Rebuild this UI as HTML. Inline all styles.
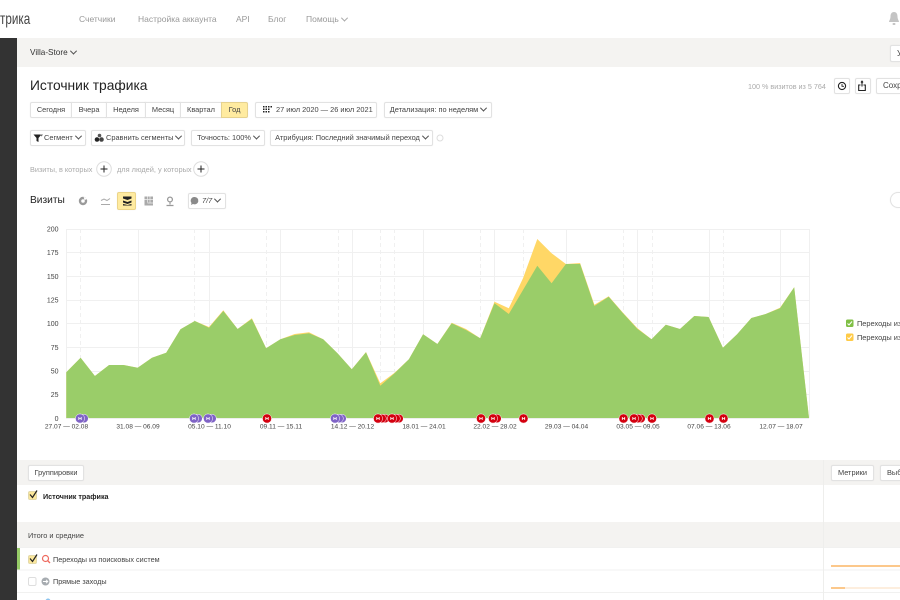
<!DOCTYPE html>
<html lang="ru"><head><meta charset="utf-8"><title>Источник трафика</title>
<style>
html,body{margin:0;padding:0;background:#fff}
body{width:900px;height:600px;overflow:hidden;position:relative;font-family:"Liberation Sans","Noto Sans CJK SC",sans-serif;font-size:7.4px;color:#333;filter:blur(.3px)}
.a{position:absolute;white-space:nowrap}
.b{position:absolute;box-sizing:border-box;background:#fff;border:1px solid #e2e2e2;border-radius:2px;box-shadow:0 0 1px rgba(0,0,0,.08);white-space:nowrap;text-align:center;color:#444;font-size:7.4px;overflow:hidden}
.e{border-right:0;border-radius:2px 0 0 2px;text-align:left;padding-left:6px;font-size:8px}
.n{color:#999;font-size:8.5px;top:14px}
.c{display:inline-block;width:4px;height:4px;border-right:1px solid #555;border-bottom:1px solid #555;transform:rotate(45deg) translate(-1px,-1px);margin-left:3px}
.band{position:absolute;left:17px;right:0;background:#f4f3f1}
svg{position:absolute;left:0;top:0}
</style></head><body>
<div class="a" style="left:0;top:11px;font-size:16px;color:#444;transform:scaleX(.73);transform-origin:0 0;width:40px;font-weight:normal">трика</div>
<div class="a n" style="left:79px">Счетчики</div>
<div class="a n" style="left:138px">Настройка аккаунта</div>
<div class="a n" style="left:236px">API</div>
<div class="a n" style="left:268px">Блог</div>
<div class="a n" style="left:306px">Помощь<span class="c" style="border-color:#aaa"></span></div>

<div class="a" style="left:0;top:38px;width:17px;height:562px;background:#333"></div>
<div class="band" style="top:38px;height:29px"></div>
<div class="a" style="left:30px;top:48px;font-size:8.2px;color:#333">Villa-Store<span class="c"></span></div>
<div class="b e" style="left:890px;top:45px;width:10px;height:17px;line-height:15px">Удалить</div>

<div class="a" style="left:30px;top:78px;font-size:13.8px;color:#222">Источник трафика</div>
<div class="a" style="left:748px;top:82px;font-size:7.2px;color:#aaa">100 % визитов из 5 764</div>
<div class="b" style="left:834px;top:78px;width:16px;height:16px"></div>
<div class="b" style="left:855px;top:78px;width:16px;height:16px"></div>
<div class="b e" style="left:876px;top:78px;width:24px;height:16px;line-height:14px">Сохранить</div>

<div class="b" style="left:30px;top:102px;width:42px;height:16px;line-height:14px;border-radius:2px 0 0 2px">Сегодня</div>
<div class="b" style="left:71px;top:102px;width:36px;height:16px;line-height:14px;border-radius:0">Вчера</div>
<div class="b" style="left:106px;top:102px;width:40px;height:16px;line-height:14px;border-radius:0">Неделя</div>
<div class="b" style="left:145px;top:102px;width:36px;height:16px;line-height:14px;border-radius:0">Месяц</div>
<div class="b" style="left:180px;top:102px;width:42px;height:16px;line-height:14px;border-radius:0">Квартал</div>
<div class="b" style="left:221px;top:102px;width:27px;height:16px;line-height:14px;background:#ffeba0;border-color:#e6d28f;border-radius:0 2px 2px 0">Год</div>
<div class="b" style="left:255px;top:102px;width:122px;height:16px;line-height:14px;text-align:left;padding-left:20px">27 июл 2020 — 26 июл 2021</div>
<div class="b" style="left:384px;top:102px;width:108px;height:16px;line-height:14px">Детализация: по неделям<span class="c"></span></div>

<div class="b" style="left:30px;top:130px;width:56px;height:16px;line-height:14px;text-align:left;padding-left:13px">Сегмент<span class="c"></span></div>
<div class="b" style="left:91px;top:130px;width:94px;height:16px;line-height:14px;text-align:left;padding-left:14px">Сравнить сегменты<span class="c"></span></div>
<div class="b" style="left:191px;top:130px;width:74px;height:16px;line-height:14px">Точность: 100%<span class="c"></span></div>
<div class="b" style="left:270px;top:130px;width:163px;height:16px;line-height:14px">Атрибуция: Последний значимый переход<span class="c"></span></div>

<div class="a" style="left:30px;top:164.500px;font-size:7.300px;color:#aaa">Визиты, в которых</div>
<div class="a" style="left:117px;top:164.500px;font-size:7.400px;color:#aaa">для людей, у которых</div>

<div class="a" style="left:30px;top:195px;font-size:10.200px;color:#222">Визиты</div>
<div class="b" style="left:117px;top:192px;width:19px;height:18px;background:#ffeba0;border-color:#ecd58a"></div>
<div class="b" style="left:188px;top:193px;width:38px;height:16px;line-height:14px;text-align:left;padding-left:13px;font-style:italic">7/7<span class="c"></span></div>
<div class="b e" style="left:890px;top:192px;width:10px;height:16px;border-radius:8px 0 0 8px"></div>

<div class="band" style="top:460px;height:25px"></div>
<div class="b" style="left:28px;top:465px;width:56px;height:16px;line-height:14px">Группировки</div>
<div class="b" style="left:831px;top:465px;width:43px;height:16px;line-height:14px">Метрики</div>
<div class="b e" style="left:880px;top:465px;width:20px;height:16px;line-height:14px;font-size:7.400px">Выбрать</div>
<div class="a" style="left:43px;top:491.500px;font-size:7.200px;font-weight:bold;color:#222">Источник трафика</div>
<div class="band" style="top:522px;height:25px"></div>
<div class="a" style="left:28px;top:531px;font-size:7.400px;color:#444">Итого и средние</div>
<div class="a" style="left:17px;top:548px;width:3px;height:22px;background:#97cc68"></div>
<div class="a" style="left:53px;top:555px;font-size:7.250px;color:#444">Переходы из поисковых систем</div>
<div class="a" style="left:53px;top:577px;font-size:7.250px;color:#444">Прямые заходы</div>
<div class="a" style="left:857px;top:319px;width:43px;overflow:hidden;font-size:7.400px;color:#444">Переходы из поисковых систем</div>
<div class="a" style="left:857px;top:333px;width:43px;overflow:hidden;font-size:7.400px;color:#444">Переходы из рекламных систем</div>

<svg width="900" height="600" viewBox="0 0 900 600">
<!-- table lines -->
<path d="M17 547.500H900M17 570H900M17 592.500H900" stroke="#f1f1f0" fill="none"/>
<path d="M823.500 460V600" stroke="#eeeeec" fill="none"/>
<rect x="831" y="565" width="69" height="2" fill="#fcc88b"/>
<rect x="831" y="587" width="14" height="2" fill="#fcc88b"/><rect x="845" y="587" width="55" height="2" fill="#fdeede"/>
<circle cx="48" cy="601" r="2.500" fill="#8cc4ee"/>

<!-- table checks -->
<g>
<rect x="28.500" y="491.500" width="8" height="8" rx="1.500" fill="#fbe79c" stroke="#e3d9aa"/>
<path d="M30 494.500l2.500 3 4.500-7" fill="none" stroke="#222" stroke-width="1.200"/>
<rect x="28.500" y="555.500" width="8" height="8" rx="1.500" fill="#fbe79c" stroke="#e3d9aa"/>
<path d="M30 558.500l2.500 3 4.500-7" fill="none" stroke="#222" stroke-width="1.200"/>
<rect x="28.500" y="577.500" width="7.500" height="8" rx="1.500" fill="#fff" stroke="#dedede"/>
<circle cx="45.500" cy="558.500" r="3" fill="none" stroke="#ee6a5f" stroke-width="1.200"/>
<path d="M47.500 560.500l2.500 2.500" stroke="#ee6a5f" stroke-width="1.300"/>
<circle cx="45.500" cy="581.500" r="4" fill="#a6abb0"/>
<path d="M43 581.500h4.500M46 579.800l1.800 1.700-1.800 1.700" stroke="#fff" fill="none" stroke-width=".9"/>
</g>

<!-- bell -->
<path d="M894 12c-2.500 0-3.500 2-3.500 4.500 0 3-1.500 4-1.500 5.500h10c0-1.500-1.500-2.500-1.500-5.500C897.500 14 896.500 12 894 12z" fill="#c4c4c4"/><rect x="892.500" y="23" width="3" height="2" rx="1" fill="#c4c4c4"/>

<!-- toolbar icons -->
<circle cx="842" cy="86" r="3.600" fill="none" stroke="#222" stroke-width="1.100"/><path d="M842 84v2.300h2" fill="none" stroke="#222" stroke-width=".9"/>
<path d="M860.500 85h-1.800v5.500h6.600V85h-1.800M863 82.500l-1-1.300-1 1.300M862 81.500v5" fill="none" stroke="#222" stroke-width="1.100"/>
<path d="M263 106h1.500v1.500H263zM265.500 106H267v1.500h-1.500zM268 106h1.500v1.500H268zM270.500 106H272v1.500h-1.500zM263 108.500h1.500v1.500H263zM265.500 108.500H267v1.500h-1.500zM268 108.500h1.500v1.500H268zM263 111h1.500v1.500H263zM265.500 111H267v1.500h-1.500zM268 111h1.500v1.500H268z" fill="#222"/>
<path d="M33.500 134.500h8l-3 3.500v4l-2-1v-3z" fill="#222"/><path d="M40 134.500h3l-1.500 2z" fill="#666"/>
<circle cx="97" cy="139.500" r="2.300" fill="#222"/><circle cx="101.500" cy="139.500" r="2.300" fill="#444"/><circle cx="99.500" cy="135.500" r="1.800" fill="#555"/>
<circle cx="440" cy="138" r="3" fill="none" stroke="#ddd"/>
<circle cx="104" cy="169" r="7.300" fill="#fff" stroke="#ddd"/><path d="M100.500 169h7M104 165.500v7" stroke="#222"/>
<circle cx="201" cy="169" r="7.300" fill="#fff" stroke="#ddd"/><path d="M197.500 169h7M201 165.500v7" stroke="#222"/>

<!-- chart view icons -->
<circle cx="83" cy="201" r="3" fill="none" stroke="#9a9a9a" stroke-width="2.400"/>
<path d="M83.500 196.500l4 2.500-3 1z" fill="#fff"/>
<path d="M101 200.500l3-1.500 3 1.500 3-2M101 204.500h9" stroke="#aaa" fill="none"/>
<path d="M123 196.500h8.500v2l-4 1.500-4.500-1.500zM123 200.500l4.500 1.500 4-1.500v2l-4 1.500-4.500-1.500zM123 204l4.500 1 4-1v1.500h-8.500z" fill="#222"/>
<path d="M144.500 196.500h8.500v9h-8.500z" fill="#aaa"/><path d="M147.500 196.500v6M150 196.500v6M144.500 199.500h8.500M147.500 203h5.500" stroke="#eee" stroke-width=".7"/>
<circle cx="170" cy="199.500" r="2.400" fill="none" stroke="#999" stroke-width="1.300"/>
<path d="M170 202.500v2M166.500 205.500h7" stroke="#999" fill="none" stroke-width="1.200"/>
<path d="M194.500 197a3.700 3.700 0 1 1-1.500 7l-2 1 .5-2a3.700 3.700 0 0 1 3-6z" fill="#8a8a8a"/>

<!-- chart grid -->
<g stroke="#f0f0f0" fill="none">
<path d="M66.500 229.500H809.500M66.500 252.500H809.500M66.500 276.500H809.500M66.500 300.500H809.500M66.500 323.500H809.500M66.500 347.500H809.500M66.500 371.500H809.500M66.500 394.500H809.500"/>
<path d="M66.500 229V418M138.500 229V418M209.500 229V418M280.500 229V418M352.500 229V418M423.500 229V418M494.500 229V418M566.500 229V418M637.500 229V418M709.500 229V418M780.500 229V418M809.500 229V418"/>
<path stroke-dasharray="4 3" d="M80.500 229V418M194.500 229V418M266.500 229V418M338.500 229V418M380.500 229V418M394.500 229V418M480.500 229V418M523.500 229V418M623.500 229V418M652.500 229V418M723.500 229V418"/>
</g>
<!-- yellow -->
<path fill="#ffd766" d="M66.300 418V372.300L80.600 357.700 94.900 376 109.100 365 123.400 365 137.700 367.700 152 357.700 166.200 352.700 180.500 329.300 194.800 321 209 327 223.300 310.300 237.600 329 251.900 318.200 266.100 348.300 280.400 339.300 294.700 334 309 332.300 323.200 339.300 337.500 353.300 351.800 369.300 366 352 380.300 383.300 394.600 372.700 408.900 359.300 423.100 334.300 437.400 344 451.700 322.700 466 329 480.200 338.300 494.500 301.700 508.800 308.300 523 278.300 537.300 239 551.600 253.300 565.900 264 580.100 263 594.400 304.700 608.700 296.300 623 312.700 637.200 328 651.500 339.300 665.800 324.700 680 329 694.300 316 708.600 317 722.900 347.700 737.100 334.300 751.400 318 765.700 314 780 307.700 794.200 287.300 809 418Z"/>
<!-- green -->
<path fill="#9acd69" d="M66.300 418V372.300L80.600 357.700 94.900 376 109.100 365 123.400 365 137.700 367.700 152 357.700 166.200 352.700 180.500 329.300 194.800 321 209 327.700 223.300 311 237.600 329 251.900 319 266.100 348.300 280.400 339.300 294.700 335 309 333.300 323.200 339.300 337.500 353.300 351.800 369.300 366 352.300 380.300 385.700 394.600 373.300 408.900 359.300 423.100 334.300 437.400 344 451.700 323.300 466 330 480.200 338.300 494.500 303.300 508.800 314 523 290 537.300 265.700 551.600 283.300 565.900 264 580.100 264 594.400 306 608.700 296.700 623 313.300 637.200 328.700 651.500 339.300 665.800 324.700 680 329 694.300 316 708.600 317 722.900 347.700 737.100 334.300 751.400 318 765.700 314 780 308.300 794.200 287.300 809 418Z"/>
<path d="M66 418.500H809" stroke="#eee" fill="none"/>

<!-- axis -->
<g font-family="Liberation Sans, sans-serif" font-size="7" fill="#444" text-anchor="end">
<text x="58.500" y="231.500">200</text><text x="58.500" y="255">175</text><text x="58.500" y="279">150</text><text x="58.500" y="302.500">125</text><text x="58.500" y="326">100</text><text x="58.500" y="350">75</text><text x="58.500" y="373.500">50</text><text x="58.500" y="397">25</text><text x="58.500" y="421">0</text>
</g>
<g font-family="Liberation Sans, sans-serif" font-size="6.600" fill="#444" text-anchor="middle">
<text x="66.500" y="428.500">27.07 — 02.08</text><text x="138" y="428.500">31.08 — 06.09</text><text x="209.500" y="428.500">05.10 — 11.10</text><text x="281" y="428.500">09.11 — 15.11</text><text x="352.500" y="428.500">14.12 — 20.12</text><text x="424" y="428.500">18.01 — 24.01</text><text x="495" y="428.500">22.02 — 28.02</text><text x="566.500" y="428.500">29.03 — 04.04</text><text x="638" y="428.500">03.05 — 09.05</text><text x="709" y="428.500">07.06 — 13.06</text><text x="781" y="428.500">12.07 — 18.07</text>
</g>

<!-- annotations -->
<g fill="#7f63c6" stroke="#fff" stroke-width=".5">
<circle cx="84" cy="418.500" r="4.300"/><circle cx="80" cy="418.500" r="4.600"/>
<circle cx="198" cy="418.500" r="4.300"/><circle cx="194" cy="418.500" r="4.600"/>
<circle cx="212" cy="418.500" r="4.300"/><circle cx="208" cy="418.500" r="4.600"/>
<circle cx="342" cy="418.500" r="4.300"/><circle cx="339" cy="418.500" r="4.300"/><circle cx="335" cy="418.500" r="4.600"/>
</g>
<g fill="#d4000f" stroke="#fff" stroke-width=".5">
<circle cx="267" cy="418.500" r="4.600"/>
<circle cx="385" cy="418.500" r="4.300"/><circle cx="382" cy="418.500" r="4.300"/><circle cx="378" cy="418.500" r="4.600"/>
<circle cx="399" cy="418.500" r="4.300"/><circle cx="396" cy="418.500" r="4.300"/><circle cx="392" cy="418.500" r="4.600"/>
<circle cx="481" cy="418.500" r="4.600"/>
<circle cx="497" cy="418.500" r="4.300"/><circle cx="493" cy="418.500" r="4.600"/>
<circle cx="523.500" cy="418.500" r="4.600"/>
<circle cx="623.500" cy="418.500" r="4.600"/>
<circle cx="641" cy="418.500" r="4.300"/><circle cx="638" cy="418.500" r="4.300"/><circle cx="634" cy="418.500" r="4.600"/>
<circle cx="652" cy="418.500" r="4.600"/>
<circle cx="709.500" cy="418.500" r="4.600"/>
<circle cx="723.500" cy="418.500" r="4.600"/>
</g>
<g stroke="#fff" stroke-width=".8" fill="none" transform="translate(0 .5)">
<path d="M78.800 416.500v3M81.200 416.500v3M78.800 418h2.400M192.800 416.500v3M195.200 416.500v3M192.800 418h2.400M206.800 416.500v3M209.200 416.500v3M206.800 418h2.400M333.800 416.500v3M336.200 416.500v3M333.800 418h2.400M265.800 416.500v3M268.200 416.500v3M265.800 418h2.400M376.800 416.500v3M379.200 416.500v3M376.800 418h2.400M390.800 416.500v3M393.200 416.500v3M390.800 418h2.400M479.800 416.500v3M482.200 416.500v3M479.800 418h2.400M491.800 416.500v3M494.200 416.500v3M491.800 418h2.400M522.300 416.500v3M524.700 416.500v3M522.300 418h2.400M622.300 416.500v3M624.700 416.500v3M622.300 418h2.400M632.800 416.500v3M635.200 416.500v3M632.800 418h2.400M650.800 416.500v3M653.200 416.500v3M650.800 418h2.400M708.300 416.500v3M710.700 416.500v3M708.300 418h2.400M722.300 416.500v3M724.700 416.500v3M722.300 418h2.400"/>
</g>

<!-- legend checks -->
<rect x="846" y="319.500" width="7.500" height="7.500" rx="1.500" fill="#7fbf45"/>
<path d="M847.500 323.500l1.500 1.500 3-3.500" stroke="#fff" fill="none"/>
<rect x="846" y="333.500" width="7.500" height="7.500" rx="1.500" fill="#ffcb47"/>
<path d="M847.500 337.500l1.500 1.500 3-3.500" stroke="#fff" fill="none"/>
</svg>
</body></html>
